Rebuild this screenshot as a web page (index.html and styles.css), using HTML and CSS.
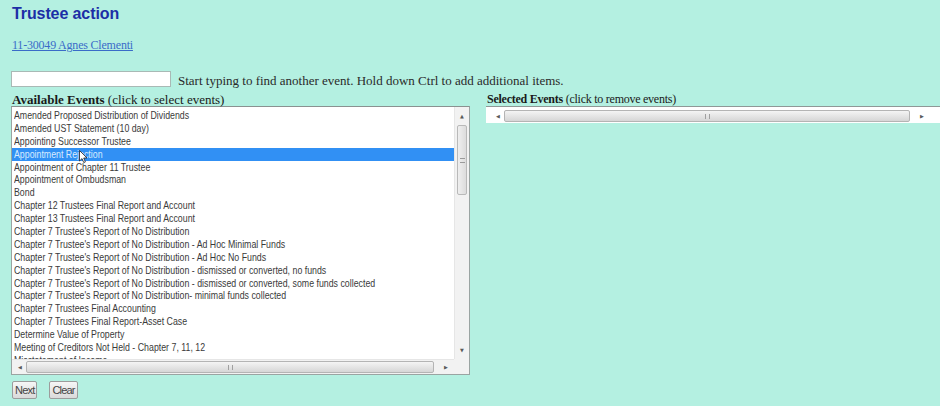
FILE: index.html
```html
<!DOCTYPE html>
<html>
<head>
<meta charset="utf-8">
<title>Trustee action</title>
<link rel="stylesheet" href="styles.css">
</head>
<body>
<div class="page">
  <h1 class="title">Trustee action</h1>
  <a class="case" href="#">11-30049 Agnes Clementi</a>

  <div class="search">
    <input class="search-input" type="text">
    <span class="hint">Start typing to find another event. Hold down Ctrl to add additional items.</span>
  </div>

  <div class="columns">
    <div class="col col-left">
      <div class="label label-left"><b>Available Events</b> (click to select events)</div>
      <div class="listbox">
        <div class="options">
          <div class="opt"><span>Amended Proposed Distribution of Dividends</span></div>
          <div class="opt"><span>Amended UST Statement (10 day)</span></div>
          <div class="opt"><span>Appointing Successor Trustee</span></div>
          <div class="opt selected"><span>Appointment Rejection</span>
            <svg class="cursor" width="9" height="14" viewBox="0 0 9 14"><path d="M0.5 0.5 L0.5 11 L3 8.6 L4.8 12.6 L6.4 11.9 L4.7 8 L8 8 Z" fill="#fff" stroke="#222" stroke-width="0.8"/></svg>
          </div>
          <div class="opt"><span>Appointment of Chapter 11 Trustee</span></div>
          <div class="opt"><span>Appointment of Ombudsman</span></div>
          <div class="opt"><span>Bond</span></div>
          <div class="opt"><span>Chapter 12 Trustees Final Report and Account</span></div>
          <div class="opt"><span>Chapter 13 Trustees Final Report and Account</span></div>
          <div class="opt"><span>Chapter 7 Trustee's Report of No Distribution</span></div>
          <div class="opt"><span>Chapter 7 Trustee's Report of No Distribution - Ad Hoc Minimal Funds</span></div>
          <div class="opt"><span>Chapter 7 Trustee's Report of No Distribution - Ad Hoc No Funds</span></div>
          <div class="opt"><span>Chapter 7 Trustee's Report of No Distribution - dismissed or converted, no funds</span></div>
          <div class="opt"><span>Chapter 7 Trustee's Report of No Distribution - dismissed or converted, some funds collected</span></div>
          <div class="opt"><span>Chapter 7 Trustee's Report of No Distribution- minimal funds collected</span></div>
          <div class="opt"><span>Chapter 7 Trustees Final Accounting</span></div>
          <div class="opt"><span>Chapter 7 Trustees Final Report-Asset Case</span></div>
          <div class="opt"><span>Determine Value of Property</span></div>
          <div class="opt"><span>Meeting of Creditors Not Held - Chapter 7, 11, 12</span></div>
          <div class="opt"><span>Misstatement of Income</span></div>
        </div>
        <div class="vscroll">
          <span class="arrow varrow">&#9650;</span>
          <div class="vthumb"><span class="grip"></span></div>
          <div class="vtrack"></div>
          <span class="arrow varrow">&#9660;</span>
        </div>
        <div class="hscroll">
          <span class="arrow">&#9664;</span>
          <div class="hthumb"><span class="grip-h"></span></div>
          <span class="arrow">&#9654;</span>
        </div>
        <div class="corner"></div>
      </div>
      <div class="buttons">
        <button class="btn" type="button">Next</button>
        <button class="btn" type="button">Clear</button>
      </div>
    </div>

    <div class="col col-right">
      <div class="label"><b>Selected Events</b> (click to remove events)</div>
      <div class="selbox">
        <div class="hscroll wide">
          <span class="arrow">&#9664;</span>
          <div class="hthumb"><span class="grip-h"></span></div>
          <span class="arrow">&#9654;</span>
        </div>
      </div>
    </div>
  </div>
</div>
</body>
</html>
```

FILE: styles.css
```css
html, body {
  margin: 0;
  padding: 0;
}

body {
  background: #b4f0e1;
  font-family: "Liberation Serif", "Times New Roman", serif;
  font-size: 12px;
  color: #222;
}

.page {
  padding: 4px 0 0 11px;
  height: 406px;
  box-sizing: border-box;
}

.title {
  margin: 0 0 0 1px;
  font-family: "Liberation Sans", Arial, sans-serif;
  font-size: 16px;
  font-weight: bold;
  color: #1c2ea6;
  line-height: 19px;
  letter-spacing: -0.1px;
}

.case {
  display: inline-block;
  margin: 15px 0 0 1px;
  color: #3a6cc8;
  font-size: 12px;
  line-height: 14px;
  letter-spacing: -0.2px;
}

.search {
  display: flex;
  align-items: flex-end;
  margin-top: 18px;
  height: 16px;
}

.search-input {
  width: 160px;
  height: 16px;
  box-sizing: border-box;
  margin: 0;
  border: 1px solid #a9b9b5;
  background: #fff;
  padding: 0;
}

.hint {
  margin-left: 7px;
  font-size: 13px;
  line-height: 13px;
  color: #2a2a2a;
}

.columns {
  display: flex;
  margin-top: 6px;
}

.col-left {
  width: 459px;
}

.col-right {
  margin-left: 16px;
  flex: 1;
}

.label {
  line-height: 13px;
  height: 13px;
  padding-left: 1px;
  letter-spacing: -0.25px;
  color: #1a1a1a;
}

.label-left {
  font-size: 13px;
  letter-spacing: 0;
}

.listbox {
  height: 269px;
  box-sizing: border-box;
  border: 1px solid #9aa4a2;
  border-top-color: #8a9190;
  background: #fff;
  display: grid;
  grid-template-columns: 1fr 15px;
  grid-template-rows: 1fr 15px;
  overflow: hidden;
}

.options {
  overflow: hidden;
  padding-top: 2px;
}

.opt {
  position: relative;
  height: 12.9px;
  line-height: 12.9px;
  font-family: "Liberation Sans", Arial, sans-serif;
  font-size: 11px;
  color: #3a3a3a;
  white-space: nowrap;
  padding-left: 2px;
}

.opt span {
  display: inline-block;
  transform: scaleX(0.8);
  transform-origin: left center;
}

.opt.selected {
  background: #3190f4;
  color: #d8ebff;
}

.cursor {
  position: absolute;
  left: 67px;
  top: 2px;
}

.vscroll {
  display: flex;
  flex-direction: column;
  align-items: center;
  background: #f2f2f2;
  border-left: 1px solid #e6e6e6;
}

.arrow {
  font-size: 5px;
  color: #5a5a5a;
  line-height: 13px;
  height: 13px;
  font-family: "DejaVu Sans", sans-serif;
}

.varrow {
  height: 18px;
  line-height: 18px;
}

.vthumb {
  width: 10px;
  height: 70px;
  box-sizing: border-box;
  border: 1px solid #b9b9b9;
  border-radius: 2px;
  background: linear-gradient(to right, #efefef, #dcdcdc);
  display: flex;
  align-items: center;
  justify-content: center;
}

.grip {
  width: 5px;
  height: 5px;
  border-top: 1px solid #9a9a9a;
  border-bottom: 1px solid #9a9a9a;
  box-sizing: border-box;
}

.vtrack {
  flex: 1;
}

.hscroll {
  display: flex;
  align-items: center;
  background: #f2f2f2;
  border-top: 1px solid #e6e6e6;
  padding: 0 2px;
}

.hscroll .arrow {
  width: 12px;
  text-align: center;
}

.hthumb {
  flex: 1;
  height: 12px;
  box-sizing: border-box;
  border: 1px solid #b4b4b4;
  border-radius: 2px;
  background: linear-gradient(to bottom, #f4f4f4, #d6d6d6);
  display: flex;
  align-items: center;
  justify-content: center;
  margin-right: 6px;
}

.grip-h {
  width: 5px;
  height: 5px;
  border-left: 1px solid #a0a0a0;
  border-right: 1px solid #a0a0a0;
  box-sizing: border-box;
}

.corner {
  background: #f2f2f2;
}

.buttons {
  display: flex;
  gap: 12px;
  margin-top: 6px;
  padding-left: 1px;
}

.btn {
  font-family: "Liberation Sans", Arial, sans-serif;
  font-size: 11px;
  letter-spacing: -0.8px;
  color: #444;
  height: 18px;
  padding: 0 2px;
  border: 1px solid #9c9c9c;
  border-radius: 2px;
  background: linear-gradient(to bottom, #f6f6f6, #dadada);
}

.selbox {
  height: 17px;
  border-top: 1px solid #8f9896;
  background: #fff;
  padding: 3px 10px 0 4px;
  box-sizing: border-box;
}

.selbox .hscroll {
  background: transparent;
  border: none;
  height: 12px;
}
```
